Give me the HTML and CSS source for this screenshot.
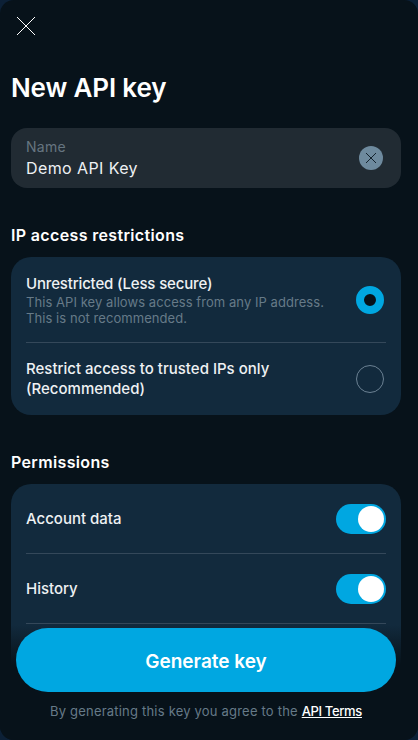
FILE: index.html
```html
<!DOCTYPE html>
<html lang="en">
<head>
<meta charset="utf-8">
<title>New API key</title>
<link rel="stylesheet" href="styles.css">
</head>
<body>
<main class="sheet">
  <button class="close" aria-label="Close">
    <svg width="20" height="20" viewBox="0 0 20 20"><path d="M1 1L19 19M19 1L1 19" stroke="#fff" stroke-width="1" fill="none"/></svg>
  </button>
  <h1 class="title">New API key</h1>
  <div class="field">
    <div class="field-text">
      <span class="field-label">Name</span>
      <span class="field-value">Demo API Key</span>
    </div>
    <span class="clear">
      <svg width="12" height="12" viewBox="0 0 12 12"><path d="M1 1L11 11M11 1L1 11" stroke="#14232e" stroke-width="1" fill="none"/></svg>
    </span>
  </div>
  <h2 class="heading heading-ip">IP access restrictions</h2>
  <section class="card">
    <div class="row row-a">
      <div class="row-text">
        <div class="row-title row-title-tight">Unrestricted (Less secure)</div>
        <div class="row-desc">This API key allows access from any IP address.<br>This is not recommended.</div>
      </div>
      <span class="radio radio-on"></span>
    </div>
    <div class="row row-b">
      <div class="row-text row-title">Restrict access to trusted IPs only<br>(Recommended)</div>
      <span class="radio"></span>
    </div>
  </section>
  <h2 class="heading heading-perm">Permissions</h2>
  <section class="card card-perm">
    <div class="row row-perm"><span class="row-title">Account data</span><span class="toggle"><span class="knob"></span></span></div>
    <div class="row row-perm"><span class="row-title">History</span><span class="toggle"><span class="knob"></span></span></div>
    <div class="row row-perm"></div>
  </section>
  <footer class="footer">
    <button class="generate">Generate key</button>
    <p class="terms">By generating this key you agree to the <a href="#" class="terms-link">API Terms</a></p>
  </footer>
</main>
</body>
</html>
```
FILE: styles.css
```css
* { box-sizing: border-box; }
html, body { margin: 0; height: 100%; background: #0c2036; }
body { font-family: Inter, "Noto Sans", sans-serif; color: #fff; overflow: hidden; }
.sheet {
  position: relative;
  height: 740px;
  padding: 16px 17px 0 11px;
  background: #07121a;
  border-radius: 14px;
  overflow: hidden;
}
.close { display: block; width: 20px; height: 20px; margin-left: 5px; padding: 0; background: none; border: 0; }
.close svg { display: block; }
.title { margin: 34px 0 0; font-size: 26px; line-height: 36px; font-weight: 600; letter-spacing: -0.15px; }
.field {
  display: flex; align-items: center; justify-content: space-between;
  height: 60px; margin-top: 22px; padding: 0 18px 0 15px;
  background: #212b33; border-radius: 16px;
}
.field-text { display: flex; flex-direction: column; }
.field-label { font-size: 14px; line-height: 20px; letter-spacing: 0.3px; color: #667580; }
.field-value { font-size: 16px; line-height: 22px; letter-spacing: 0.4px; color: #eef1f3; }
.clear { display: flex; align-items: center; justify-content: center; width: 24px; height: 24px; border-radius: 50%; background: #6e8a9e; }
.heading { margin: 0; font-size: 16px; line-height: 22px; font-weight: 600; letter-spacing: 0.35px; }
.heading-ip { margin-top: 36px; }
.heading-perm { margin-top: 36px; }
.card { margin-top: 11px; padding: 0 15px; background: #122a3d; border-radius: 20px; }
.card-perm { padding-top: 1px; }
.row { display: flex; align-items: center; justify-content: space-between; }
.row + .row { border-top: 1px solid #34485a; }
.row-a { height: 85px; }
.row-b { height: 73px; }
.row-perm { height: 68px; }
.row-perm + .row-perm { height: 70px; padding-top: 1px; }
.row-title { font-size: 15px; line-height: 20px; font-weight: 500; color: #eef1f3; }
.row-title-tight { letter-spacing: -0.16px; }
.row-desc { font-size: 13px; line-height: 16px; letter-spacing: 0.06px; color: #667a88; }
.radio { flex: none; width: 28px; height: 28px; margin-right: 2px; border-radius: 50%; border: 1.5px solid #6b8193; }
.radio-on { border: 8.5px solid #00a7e1; background: #07121a; }
.toggle { display: flex; justify-content: flex-end; align-items: center; width: 50px; height: 30px; padding: 2px; border-radius: 15px; background: #00a7e1; }
.knob { width: 26px; height: 26px; border-radius: 50%; background: #fff; }
.footer {
  position: absolute; left: 0; right: 0; bottom: 0;
  padding: 3px 22px 0 16px; height: 115px;
  background: linear-gradient(to bottom, rgba(7,18,26,0) 0, #07121a 40px);
}
.generate {
  display: block; width: 380px; height: 64px; padding: 3px 0 0;
  background: #00a7e1; border: 0; border-radius: 32px;
  color: #fff; font: 600 19px/24px Inter, sans-serif;
}
.terms { margin: 10px 0 0; font-size: 13px; line-height: 18px; letter-spacing: 0.2px; color: #667a88; text-align: center; white-space: nowrap; }
.terms-link { color: #fff; font-weight: 500; letter-spacing: -0.35px; text-decoration: underline; }
```
